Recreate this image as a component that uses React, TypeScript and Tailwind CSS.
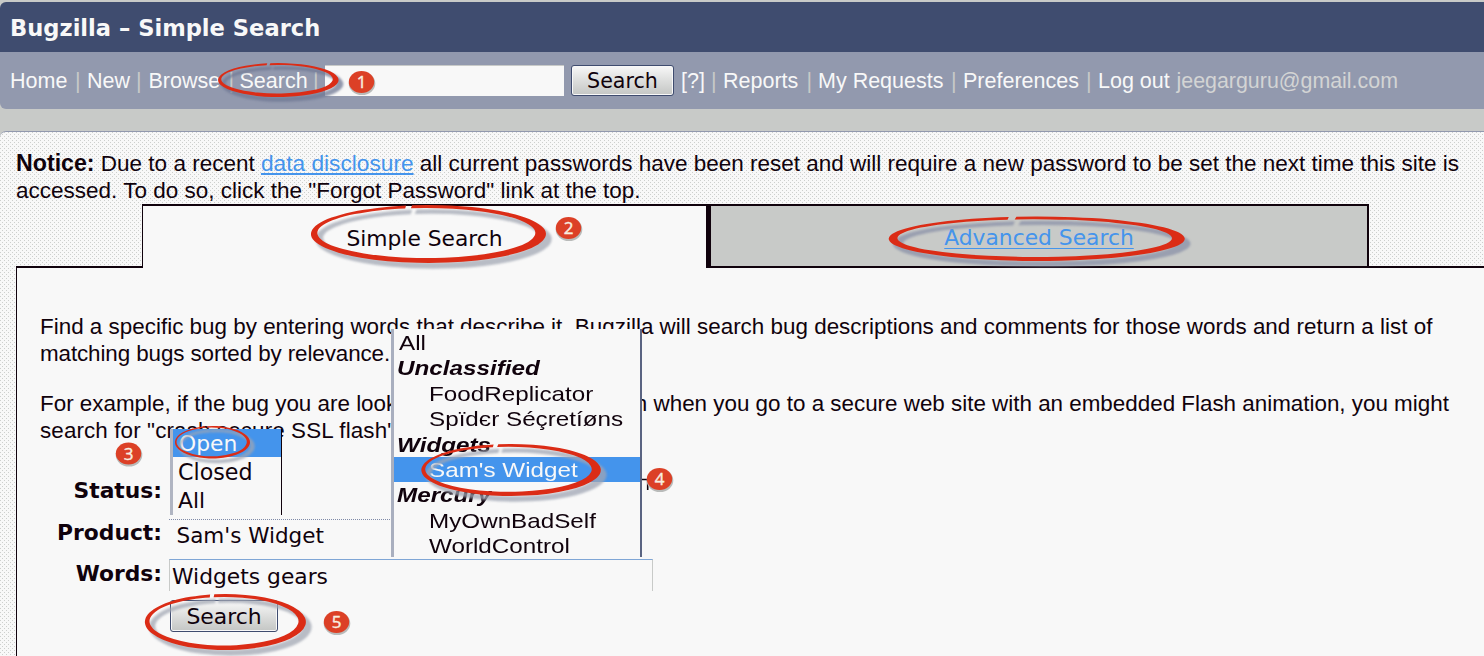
import type { ReactNode } from "react";

const SANS = "font-['Liberation_Sans',sans-serif]";
const WIDE = "font-['DejaVu_Sans',sans-serif]";

type Box = [number, number, number, number];

function ringPath(outer: Box, inner: Box) {
  const point = ([x1, y1, x2, y2]: Box, deg: number) => {
    const a = (deg * Math.PI) / 180;
    const x = (x1 + x2) / 2 + ((x2 - x1) / 2) * Math.cos(a);
    const y = (y1 + y2) / 2 + ((y2 - y1) / 2) * Math.sin(a);
    return `${x.toFixed(2)} ${y.toFixed(2)}`;
  };
  const radii = ([x1, y1, x2, y2]: Box) => `${(x2 - x1) / 2} ${(y2 - y1) / 2}`;
  const start = 262;
  const end = 259;
  return [
    `M${point(outer, start)}`,
    `A${radii(outer)} 0 1 1 ${point(outer, end)}`,
    `L${point(inner, end)}`,
    `A${radii(inner)} 0 1 0 ${point(inner, start)}`,
    "Z",
  ].join(" ");
}

const rings: { outer: Box; inner: Box; shadow: number; tone: string }[] = [
  { outer: [218.5, 63, 339, 97], inner: [221.5, 65, 333, 93.5], shadow: 4, tone: "#6f7894" },
  { outer: [311, 205, 546, 263], inner: [317, 208, 535, 258], shadow: 5, tone: "#a3a8b4" },
  { outer: [889, 216.5, 1185, 261], inner: [896.5, 219.3, 1171, 257], shadow: 5, tone: "#8a91a8" },
  { outer: [175, 426, 250, 458.5], inner: [176.8, 427.5, 247, 456.3], shadow: 4, tone: "#9fa5b3" },
  { outer: [421, 444, 600.5, 496], inner: [425.5, 446.8, 592, 491.8], shadow: 5, tone: "#a0a6b4" },
  { outer: [145, 594, 306, 650], inner: [149.5, 597, 298.5, 645.5], shadow: 5, tone: "#a3a8b4" },
];

const markers = [
  { n: 1, x: 361.5, y: 82 },
  { n: 2, x: 568.5, y: 228 },
  { n: 3, x: 128.5, y: 453.5 },
  { n: 4, x: 659.5, y: 479 },
  { n: 5, x: 336.5, y: 622 },
];

function Annotations() {
  return (
    <svg className="pointer-events-none absolute inset-0 z-20" width="1484" height="656" viewBox="0 0 1484 656">
      <defs>
        <filter id="soft" x="-10%" y="-20%" width="120%" height="150%">
          <feGaussianBlur stdDeviation="1.3" />
        </filter>
      </defs>
      {rings.map((r, i) => {
        const d = ringPath(r.outer, r.inner);
        return (
          <g key={i}>
            <path d={d} fill={r.tone} stroke={r.tone} strokeWidth="1.5" opacity="0.75" filter="url(#soft)" transform={`translate(${r.shadow} ${r.shadow})`} />
            <path d={d} fill="#db2c16" />
          </g>
        );
      })}
      {markers.map((m) => (
        <g key={m.n}>
          <ellipse cx={m.x + 0.5} cy={m.y + 1.5} rx="13.3" ry="11.5" fill="#b9bbba" />
          <ellipse cx={m.x} cy={m.y} rx="12.7" ry="11" fill="#dc4026" />
          <text x={m.x} y={m.y + 6} textAnchor="middle" fontSize="17" fill="#f8efe0" stroke="#f8efe0" strokeWidth="0.4" fontFamily="Open Sans, sans-serif">
            {m.n}
          </text>
        </g>
      ))}
    </svg>
  );
}

function Sep({ className }: { className: string }) {
  return <span className={`shrink-0 text-[#c8cac8] ${className}`}>|</span>;
}

function GreyButton({ className, children }: { className: string; children: ReactNode }) {
  return (
    <button
      className={`${WIDE} flex shrink-0 items-center justify-center rounded-[3px] border border-[#3f4c6f] bg-linear-to-b from-[#f8f8f8] via-[#dddedd] to-[#c4c6c4] text-[#10020c] shadow-[inset_0_0_0_1px_#f8f8f8] ${className}`}
    >
      {children}
    </button>
  );
}

const productRows = [
  { text: "All", kind: "all" },
  { text: "Unclassified", kind: "group" },
  { text: "FoodReplicator", kind: "item" },
  { text: "Spïdєr Séçretíøns", kind: "item" },
  { text: "Widgets", kind: "group" },
  { text: "Sam's Widget", kind: "active" },
  { text: "Mercury", kind: "group" },
  { text: "MyOwnBadSelf", kind: "item" },
  { text: "WorldControl", kind: "item" },
];

const rowStyle: Record<string, string> = {
  all: "pl-[5px]",
  group: "pl-[3px] font-bold italic",
  item: "pl-[34.5px]",
  active: "pl-[34.5px] bg-[#4494ec] text-[#f8f8f8]",
};

function ProductList() {
  return (
    <div
      className={`${SANS} absolute left-[391px] top-[329px] z-10 h-[228px] w-[251px] overflow-hidden border-l-[3px] border-r-2 border-l-[#a9afbf] border-r-[#5a6482] bg-[#f8f8f8] pt-px text-[20.2px] leading-[27.4px]`}
    >
      {productRows.map((r) => (
        <div key={r.text} className={`h-[25.4px] whitespace-nowrap ${rowStyle[r.kind]}`}>
          <span className="inline-block origin-left scale-x-[1.2]">{r.text}</span>
        </div>
      ))}
    </div>
  );
}

export default function App() {
  return (
    <div className={`${SANS} relative h-[656px] w-[1484px] overflow-hidden bg-[#c8cac8] pt-[2px] text-[#10020c]`}>
      <header className={`${WIDE} flex h-[50px] items-center rounded-tl-[6px] bg-[#3f4c6f] pl-[10px] pt-[3px] text-[22.6px] font-bold text-[#f8f8f8]`}>
        Bugzilla – Simple Search
      </header>

      <nav className="flex h-[57px] items-center whitespace-nowrap rounded-bl-[6px] bg-[#9299ae] pl-[10px] text-[21.5px] text-[#f8f8f8]">
        <div className="flex pt-px">
          <span className="w-[65px] shrink-0">Home</span>
          <Sep className="w-[12px]" />
          <span className="w-[49px] shrink-0">New</span>
          <Sep className="w-[12.5px]" />
          <span className="w-[80px] shrink-0">Browse</span>
          <Sep className="w-[11px]" />
          <span className="w-[73.5px] shrink-0">Search</span>
          <Sep className="w-[12px]" />
        </div>
        <span className="h-[31px] w-[239px] shrink-0 border-t border-[#c8cac8] bg-[#f8f8f8]" />
        <GreyButton className="ml-[7px] h-[31px] w-[103px] pt-[2px] text-[20.6px]">Search</GreyButton>
        <div className="flex pl-[7px] pt-px">
          <span className="w-[30px] shrink-0">[?]</span>
          <Sep className="w-[12px]" />
          <span className="w-[83.5px] shrink-0">Reports</span>
          <Sep className="w-[11.5px]" />
          <span className="w-[133px] shrink-0">My Requests</span>
          <Sep className="w-[12px]" />
          <span className="w-[123px] shrink-0">Preferences</span>
          <Sep className="w-[12px]" />
          <span className="w-[78.5px] shrink-0">Log out</span>
          <span className="shrink-0 text-[21.4px] text-[#d3d4d4]">jeegarguru@gmail.com</span>
        </div>
      </nav>

      <main className="mt-[22px] rounded-tl-[6px] border-t border-[#9299ae] bg-[#f8f8f8] bg-[conic-gradient(from_270deg_at_1px_1px,#cdcfcd_90deg,transparent_0)] bg-size-[4px_4px]">
        <div className="bg-[conic-gradient(from_270deg_at_1px_1px,#cdcfcd_90deg,transparent_0)] bg-size-[4px_4px] bg-position-[2px_2px]">
          <p className="whitespace-nowrap pl-[16px] pt-[18px] text-[22.5px] leading-[27px]">
            <b className="text-[23.2px] leading-[20px]">Notice:</b> Due to a recent{" "}
            <a className="text-[22.7px] leading-[20px] text-[#4494ec] underline decoration-2 underline-offset-2">data disclosure</a> all current passwords have been reset and
            will require a new password to be set the next time this site is
            <br />
            accessed. To do so, click the "Forgot Password" link at the top.
          </p>

          <div className={`${WIDE} flex h-[64px] text-[21.8px]`}>
            <div className="ml-[16px] w-[126px] shrink-0 border-b-2 border-[#10020c]" />
            <div className="flex w-[564px] shrink-0 items-center justify-center border-l border-t-2 border-[#10020c] bg-[#f8f8f8] pt-[4px]">Simple Search</div>
            <div className="flex w-[663px] shrink-0 items-center justify-center border-2 border-l-[5px] border-[#10020c] bg-[#c8cac8] pt-[4px]">
              <a className="text-[#4494ec] underline decoration-1 underline-offset-[3px]">Advanced Search</a>
            </div>
            <div className="grow border-b-2 border-[#10020c]" />
          </div>
        </div>

        <section className="flex">
          <div className="h-[400px] w-[16px] shrink-0 bg-[conic-gradient(from_270deg_at_1px_1px,#cdcfcd_90deg,transparent_0)] bg-size-[4px_4px] bg-position-[2px_2px]" />
          <div className="h-[400px] grow border-l border-[#10020c] bg-[#f8f8f8] pt-[45px]">
            <div className="whitespace-nowrap pl-[23px] text-[22.4px] leading-[27px]">
              <p>
                <span className="tracking-[0.016px]">
                  Find a specific bug by entering words that describe it. Bugzilla will search bug descriptions and comments for those words and return a list of
                </span>
                <br />
                <span className="tracking-[-0.1px]">matching bugs sorted by relevance.</span>
              </p>
              <p className="mt-[23px]">
                For example, if the bug you are looking for is a browser crash when you go to a secure web site with an embedded Flash animation, you might
                <br />
                <span className="tracking-[0.12px]">search for "crash secure SSL flash".</span>
              </p>
            </div>

            <form className={`${WIDE} mt-[27px] text-[21.8px]`}>
              <div className="relative flex h-[41.5px] items-center">
                <label className="w-[145px] text-right font-bold">Status:</label>
                <div className="absolute left-[153px] top-[-42px] h-[86px] w-[112px] border-l-[3px] border-r border-l-[#b0b5c2] border-r-[#10020c] bg-[#f8f8f8] leading-[30px]">
                  <div className="h-[28px] bg-[#4494ec] pl-[6px] leading-[29px] text-[#f8f8f8]">Open</div>
                  <div className="h-[29px] pl-[5px] text-[22.2px]">Closed</div>
                  <div className="h-[29px] pl-[5px]">All</div>
                </div>
              </div>
              <div className="flex h-[41.5px] items-center">
                <label className="w-[145px] text-right font-bold">Product:</label>
                <div className="ml-[7px] mt-[5px] flex h-[34px] w-[223px] items-center border-t border-dotted border-[#7f8aa8] pl-[7.5px] text-[21.5px]">Sam's Widget</div>
              </div>
              <div className="flex h-[41.5px] items-center">
                <label className="w-[145px] text-right font-bold">Words:</label>
                <div className="ml-[7px] mt-px flex h-[32px] w-[484px] items-center border border-b-0 border-[#c8cac8] border-t-[#7fa6d6] pl-[2px] pt-[4px]">Widgets gears</div>
              </div>
              <GreyButton className="ml-[153px] mt-[4px] h-[32px] w-[108px] pt-[4px] text-[21.9px]">Search</GreyButton>
            </form>
          </div>
        </section>
      </main>

      <ProductList />
      <svg className="absolute left-[642px] top-[478px]" width="7" height="13" viewBox="0 0 7 13">
        <path d="M0 1.5h4.5q1.2 0 1.2 1.5v9" fill="none" stroke="#10020c" strokeWidth="1.6" />
      </svg>
      <Annotations />
    </div>
  );
}
